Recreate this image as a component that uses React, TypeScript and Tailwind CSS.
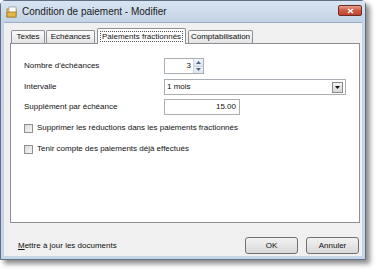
import React from "react";

function Checkbox() {
  return (
    <div className="w-[9px] h-[9px] border border-[#8f8f8f] bg-gradient-to-br from-[#dcdcdc] to-[#f6f6f6] shrink-0" />
  );
}

export default function App() {
  return (
    <div className="w-[376px] h-[271px] bg-white text-[#111] font-['Liberation_Sans',Arial,sans-serif] relative">
      <div className="w-[366px] h-[260px] flex flex-col border border-[#5f6f84] rounded-t-[5px] bg-[#c5d5e8] shadow-[4px_4px_5px_rgba(0,0,0,0.45)]">
        {/* Title bar */}
        <div className="h-[21px] flex items-center pl-[5px] pr-[3px] bg-gradient-to-b from-[#d8e4f1] to-[#c3d3e6]">
          <svg width="12" height="12" viewBox="0 0 12 12" className="mt-[1px]">
            <rect x="1" y="3" width="9" height="8" fill="#f3d37a" stroke="#a07a20" strokeWidth="0.8" />
            <rect x="3" y="1" width="7" height="8" fill="#fff" stroke="#888" strokeWidth="0.6" />
            <rect x="1" y="6" width="9" height="5" fill="#e7b548" stroke="#a07a20" strokeWidth="0.8" />
          </svg>
          <span className="ml-[4px] text-[10px] text-[#1a1a1a]">Condition de paiement - Modifier</span>
          <div className="ml-auto w-[24px] h-[11px] mt-[-2px] rounded-[2px] border border-[#6b2a22] bg-gradient-to-b from-[#e8a08c] via-[#cd5a44] to-[#c0432e] flex items-center justify-center">
            <svg width="7" height="6" viewBox="0 0 7 6">
              <path d="M1 1 L6 5 M6 1 L1 5" stroke="#fff" strokeWidth="1.6" />
            </svg>
          </div>
        </div>
        {/* Client area */}
        <div className="flex-1 mx-[3px] mb-[3px] bg-[#f0f0f0] border-t border-[#9aacc2] flex flex-col pl-[6px] pr-[2px] pt-[4px]">
          {/* Tabs */}
          <div className="flex items-end h-[16px] pl-[1px] text-[8px] relative z-10">
            <div className="w-[34px] h-[13px] border border-b-0 border-[#8c8f96] rounded-t-[2px] bg-gradient-to-b from-[#fbfbfb] to-[#e4e4e4] flex items-center justify-center">Textes</div>
            <div className="ml-[1px] w-[49px] h-[13px] border border-b-0 border-[#8c8f96] rounded-t-[2px] bg-gradient-to-b from-[#fbfbfb] to-[#e4e4e4] flex items-center justify-center">Echéances</div>
            <div className="ml-[2px] w-[89px] h-[16px] mb-[-1px] border border-b-0 border-[#8c8f96] rounded-t-[2px] bg-white flex items-start justify-center pt-[2px]">
              <span className="border border-dotted border-[#555] px-[1px] leading-[9px]">Paiements fractionnés</span>
            </div>
            <div className="ml-[2px] w-[65px] h-[13px] border border-b-0 border-[#8c8f96] rounded-t-[2px] bg-gradient-to-b from-[#fbfbfb] to-[#e4e4e4] flex items-center justify-center">Comptabilisation</div>
          </div>
          {/* Panel */}
          <div className="h-[180px] border border-[#8c8f96] bg-white pl-[13px] pt-[14px] text-[8px]">
            <div className="flex items-center h-[16px]">
              <div className="w-[140px]">Nombre d'échéances</div>
              <div className="w-[40px] h-[16px] border border-[#a9aeb5] flex items-center">
                <div className="flex-1 text-right pr-[2px]">3</div>
                <div className="w-[10px] h-[14px] flex flex-col border-l border-[#d0d6de]">
                  <div className="flex-1 bg-gradient-to-b from-[#f2f5f9] to-[#dde5ee] flex items-center justify-center border-b border-[#c7d0db]">
                    <svg width="5" height="3" viewBox="0 0 5 3"><path d="M0 3 L2.5 0 L5 3 Z" fill="#4d6185" /></svg>
                  </div>
                  <div className="flex-1 bg-gradient-to-b from-[#f2f5f9] to-[#dde5ee] flex items-center justify-center">
                    <svg width="5" height="3" viewBox="0 0 5 3"><path d="M0 0 L2.5 3 L5 0 Z" fill="#4d6185" /></svg>
                  </div>
                </div>
              </div>
            </div>
            <div className="flex items-center h-[16px] mt-[5px]">
              <div className="w-[140px]">Intervalle</div>
              <div className="w-[182px] h-[16px] border border-[#a9aeb5] flex items-center pl-[2px]">
                <div className="flex-1">1 mois</div>
                <div className="w-[11px] h-[11px] mr-[2px] border border-[#8a8a8a] bg-gradient-to-b from-[#f4f4f4] to-[#d8d8d8] flex items-center justify-center">
                  <svg width="5" height="3" viewBox="0 0 5 3"><path d="M0 0 L2.5 3 L5 0 Z" fill="#111" /></svg>
                </div>
              </div>
            </div>
            <div className="flex items-center h-[16px] mt-[4px]">
              <div className="w-[140px]">Supplément par échéance</div>
              <div className="w-[76px] h-[16px] border border-[#a9aeb5] flex items-center justify-end pr-[3px]">15.00</div>
            </div>
            <div className="flex items-center mt-[7px] gap-[4px]">
              <Checkbox />
              <span>Supprimer les réductions dans les paiements fractionnés</span>
            </div>
            <div className="flex items-center mt-[9px] gap-[4px]">
              <Checkbox />
              <span>Tenir compte des paiements déjà effectués</span>
            </div>
          </div>
          {/* Bottom */}
          <div className="flex items-center mt-[14px] text-[8px]">
            <div className="ml-[8px]"><span className="underline">M</span>ettre à jour les documents</div>
            <div className="ml-auto w-[53px] h-[17px] rounded-[3px] border border-[#707070] bg-gradient-to-b from-[#f2f2f2] to-[#d9d9d9] flex items-center justify-center">OK</div>
            <div className="ml-[8px] mr-[1px] w-[53px] h-[17px] rounded-[3px] border border-[#707070] bg-gradient-to-b from-[#f2f2f2] to-[#d9d9d9] flex items-center justify-center">Annuler</div>
          </div>
        </div>
      </div>
    </div>
  );
}
